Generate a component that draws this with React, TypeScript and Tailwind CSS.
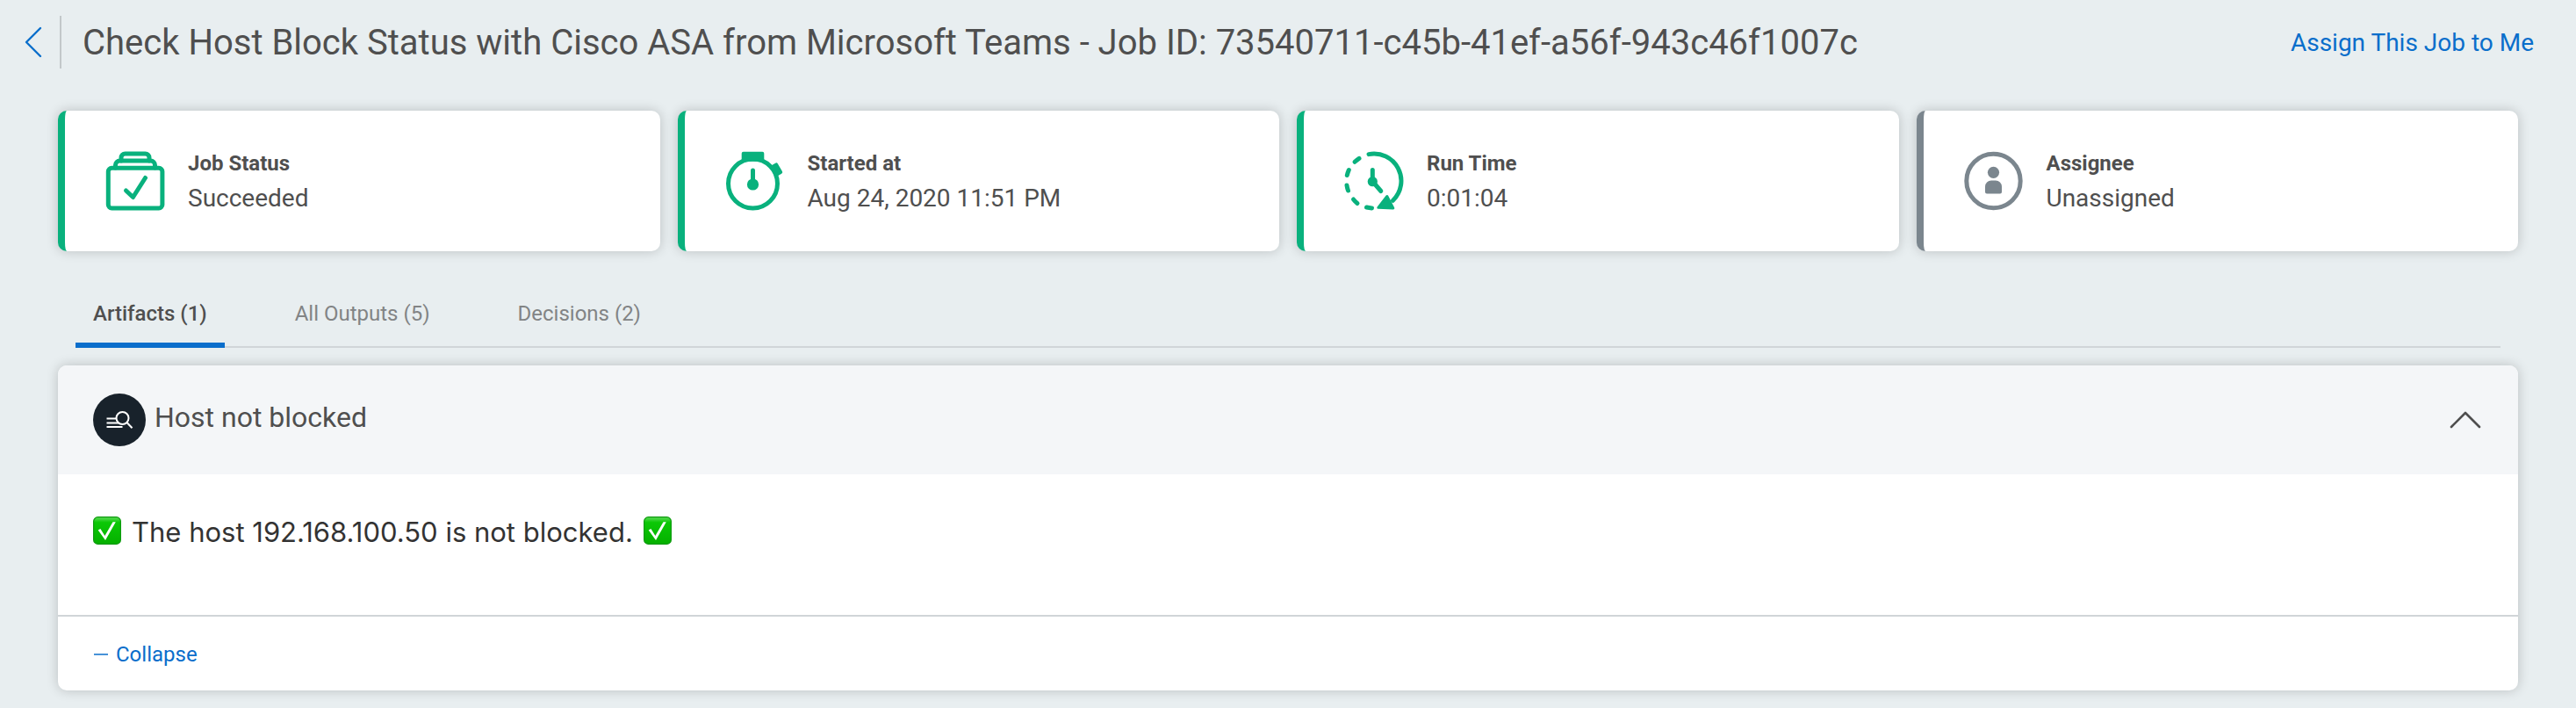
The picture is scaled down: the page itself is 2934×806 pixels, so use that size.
import React from "react";

const GREEN = "#09b17d";

function StatusIcon() {
  return (
    <svg width="68" height="68" viewBox="0 0 68 68" fill="none" stroke={GREEN} strokeWidth="5" strokeLinecap="round" strokeLinejoin="round" aria-hidden="true">
      <rect x="3.3" y="19.3" width="61.6" height="45.6" rx="4" />
      <path d="M11.5 19v-3a5 5 0 0 1 5-5h35a5 5 0 0 1 5 5v3" />
      <path d="M18 11V7.500a4.500 4.500 0 0 1 4.500-4.500h23a4.500 4.500 0 0 1 4.500 4.500V11" />
      <path d="M23.500 45l8 7.500 14-22" />
    </svg>
  );
}

function StopwatchIcon() {
  return (
    <svg width="68" height="68" viewBox="0 0 68 68" fill="none" aria-hidden="true">
      <circle cx="31.500" cy="37" r="28" stroke={GREEN} strokeWidth="5" />
      <rect x="18.700" y="0.700" width="25.600" height="11" rx="2" fill={GREEN} />
      <rect x="54" y="14" width="9" height="14" rx="2" fill={GREEN} transform="rotate(-30 58.500 21)" />
      <path d="M31.500 22v14" stroke={GREEN} strokeWidth="5" strokeLinecap="round" />
      <circle cx="31.500" cy="38" r="6.600" fill={GREEN} />
    </svg>
  );
}

function RunTimeIcon() {
  return (
    <svg width="68" height="68" viewBox="0 0 68 68" fill="none" stroke={GREEN} strokeWidth="5" strokeLinecap="round" strokeLinejoin="round" aria-hidden="true">
      <path d="M28 3.600A31 31 0 0 1 55.500 56.300" />
      <path d="M17 8.300q-2.500 1.600-5 4M5.300 21.500q-1.300 3-2 6M3 39q.400 3 1.500 6M10.500 55q2 2.500 4.500 4.500M25.500 64q3 .700 6 .900" />
      <path d="M48.800 51.500l7 13.500-17 -.700z" fill={GREEN} strokeWidth="3" />
      <path d="M32.300 21.500v13l9.500 11" />
      <circle cx="32.300" cy="34.700" r="5.600" fill={GREEN} stroke="none" />
    </svg>
  );
}

function AssigneeIcon() {
  return (
    <svg width="68" height="68" viewBox="0 0 68 68" fill="#7b868e" aria-hidden="true">
      <circle cx="33.500" cy="34" r="30.700" fill="none" stroke="#7b868e" strokeWidth="5" />
      <circle cx="33.500" cy="24.300" r="6.600" />
      <path d="M24 46.500V40.500a7 7 0 0 1 7-7h5a7 7 0 0 1 7 7v6a2 2 0 0 1-2 2H26a2 2 0 0 1-2-2z" />
    </svg>
  );
}

const stats = [
  { label: "Job Status", value: "Succeeded", Icon: StatusIcon, border: "border-[#09b17d]" },
  { label: "Started at", value: "Aug 24, 2020 11:51 PM", Icon: StopwatchIcon, border: "border-[#09b17d]" },
  { label: "Run Time", value: "0:01:04", Icon: RunTimeIcon, border: "border-[#09b17d]" },
  { label: "Assignee", value: "Unassigned", Icon: AssigneeIcon, border: "border-[#7b868e]" },
];

const tabs = [
  { label: "Artifacts (1)", active: true },
  { label: "All Outputs (5)", active: false },
  { label: "Decisions (2)", active: false },
];

function CheckEmoji() {
  return (
    <svg className="shrink-0" width="32" height="32" viewBox="0 0 32 32" role="img" aria-label="Check mark">
      <defs>
        <linearGradient id="check-fill" x1="0" y1="0" x2="0" y2="1">
          <stop offset="0" stopColor="#5fdc5a" />
          <stop offset="0.200" stopColor="#0cc806" />
          <stop offset="1" stopColor="#05b000" />
        </linearGradient>
      </defs>
      <rect x="0.600" y="0.600" width="30.800" height="30.800" rx="5" fill="url(#check-fill)" stroke="#0f9a10" strokeWidth="1.200" />
      <path d="M5.700 15.500l2.700-1.500 5 8L22.500 6.200h3.300L14 27z" fill="#fff" />
    </svg>
  );
}

export default function App() {
  return (
    <div className="min-h-screen bg-[#e8eef0] pb-5 font-[Roboto,sans-serif] text-[#4f4f4f]">
      <header className="flex h-24 items-center pr-12 pl-7">
        <button type="button" aria-label="Back" className="flex w-10 items-center">
          <svg width="20" height="36" viewBox="0 0 20 36" fill="none" stroke="#0a6ecb" strokeWidth="2.400" strokeLinecap="round" strokeLinejoin="round" aria-hidden="true">
            <path d="M18 2L2 18l16 16" />
          </svg>
        </button>
        <div className="h-15 w-0.5 bg-[#c3c8ca]" />
        <h1 className="ml-6 flex-1 pt-0.5 text-[40px] leading-12">
          Check Host Block Status with Cisco ASA from Microsoft Teams - Job ID: 73540711-c45b-41ef-a56f-943c46f1007c
        </h1>
        <a href="#assign" className="pt-0.5 text-[28px] leading-10 text-[#0a6ecb]">
          Assign This Job to Me
        </a>
      </header>

      <main className="px-[66px] pt-[30px]">
        <section className="grid grid-cols-4 gap-5">
          {stats.map(({ label, value, Icon, border }) => (
            <div key={label} className={`flex h-40 items-center gap-[26px] rounded-[10px] border-l-8 bg-white pl-[46px] shadow-[0_0_14px_rgba(0,0,0,0.2)] ${border}`}>
              <Icon />
              <div className="grid gap-0.5 pt-0.5">
                <div className="text-2xl leading-9 font-bold">{label}</div>
                <div className="text-[28px] leading-10">{value}</div>
              </div>
            </div>
          ))}
        </section>

        <div role="tablist" className="mx-5 mt-8 flex h-[78px] gap-[60px] border-b-2 border-[#d0d5d8]">
          {tabs.map(({ label, active }) => (
            <button
              key={label}
              type="button"
              role="tab"
              aria-selected={active}
              className={`-mb-0.5 h-[78px] border-b-6 px-5 pt-1.5 text-2xl ${active ? "border-[#0a6ecb] font-medium" : "border-transparent text-[#828485]"}`}
            >
              {label}
            </button>
          ))}
        </div>

        <section className="mt-5 overflow-hidden rounded-[10px] bg-white shadow-[0_0_14px_rgba(0,0,0,0.2)]">
          <div className="flex h-31 items-center bg-[#f4f6f8] px-10">
            <svg width="60" height="60" viewBox="0 0 60 60" fill="none" stroke="#fff" strokeWidth="2" aria-hidden="true">
              <circle cx="30" cy="30" r="30" fill="#18222b" stroke="none" />
              <path d="M15.500 28.500h11M15.500 33.500h14M15.500 38h18" />
              <circle cx="33.500" cy="28" r="7" />
              <path d="M38.500 33l6 6.300" />
            </svg>
            <h2 className="ml-2.5 flex-1 pb-1.5 text-[32px] leading-10">Host not blocked</h2>
            <button type="button" aria-label="Collapse panel" className="flex">
              <svg width="40" height="24" viewBox="0 0 40 24" fill="none" stroke="#4f4f4f" strokeWidth="2.600" strokeLinecap="round" strokeLinejoin="round" aria-hidden="true">
                <path d="M4 20L20 4l16 16" />
              </svg>
            </button>
          </div>
          <div className="flex h-40 items-start gap-3 px-10 pt-12 font-[Inter,sans-serif] text-[31px] leading-9 text-[#333]">
            <CheckEmoji />
            <p>The host 192.168.100.50 is not blocked.</p>
            <CheckEmoji />
          </div>
          <div className="flex h-[86px] items-center border-t-2 border-[#d0d5d8] px-10 pt-0.5">
            <button type="button" className="flex items-center gap-2 text-2xl text-[#0a6ecb]">
              <svg width="18" height="4" viewBox="0 0 18 4" aria-hidden="true">
                <path d="M1 2h16" stroke="#0a6ecb" strokeWidth="1.500" />
              </svg>
              Collapse
            </button>
          </div>
        </section>
      </main>
    </div>
  );
}
